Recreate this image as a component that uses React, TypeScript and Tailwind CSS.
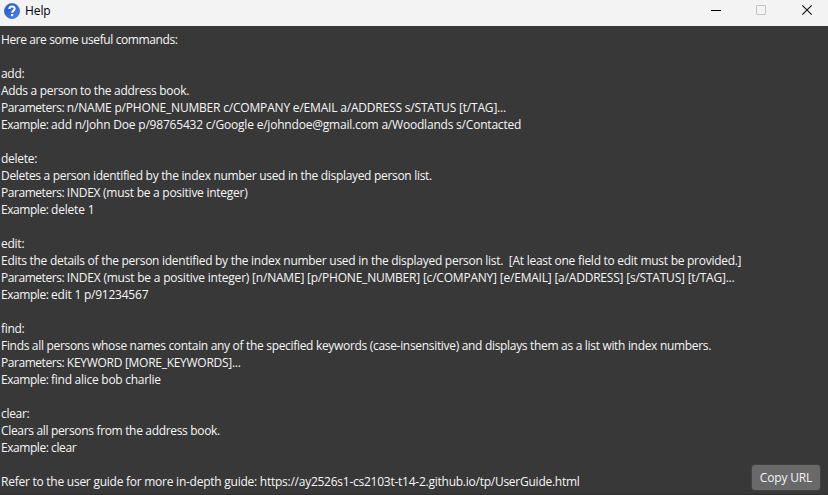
type Line = { label?: string; text: string; tracking: string };

const blank: Line = { text: "", tracking: "" };

const lines: Line[] = [
  { text: "Here are some useful commands:", tracking: "tracking-[-0.4px]" },
  blank,
  { text: "add:", tracking: "tracking-[-0.3px]" },
  { text: "Adds a person to the address book.", tracking: "tracking-[-0.3px]" },
  { label: "Parameters: ", text: "n/NAME p/PHONE_NUMBER c/COMPANY e/EMAIL a/ADDRESS s/STATUS [t/TAG]...", tracking: "tracking-[-0.19px]" },
  { label: "Example: ", text: "add n/John Doe p/98765432 c/Google e/johndoe@gmail.com a/Woodlands s/Contacted", tracking: "tracking-[-0.205px]" },
  blank,
  { text: "delete:", tracking: "tracking-[-0.28px]" },
  { text: "Deletes a person identified by the index number used in the displayed person list.", tracking: "tracking-[-0.31px]" },
  { label: "Parameters: ", text: "INDEX (must be a positive integer)", tracking: "tracking-[-0.26px]" },
  { label: "Example: ", text: "delete 1", tracking: "tracking-[-0.2px]" },
  blank,
  { text: "edit:", tracking: "tracking-[-0.25px]" },
  { text: "Edits the details of the person identified by the index number used in the displayed person list.  [At least one field to edit must be provided.]", tracking: "tracking-[-0.275px]" },
  { label: "Parameters: ", text: "INDEX (must be a positive integer) [n/NAME] [p/PHONE_NUMBER] [c/COMPANY] [e/EMAIL] [a/ADDRESS] [s/STATUS] [t/TAG]...", tracking: "tracking-[-0.21px]" },
  { label: "Example: ", text: "edit 1 p/91234567", tracking: "tracking-[-0.23px]" },
  blank,
  { text: "find:", tracking: "tracking-[-0.3px]" },
  { text: "Finds all persons whose names contain any of the specified keywords (case-insensitive) and displays them as a list with index numbers.", tracking: "tracking-[-0.315px]" },
  { label: "Parameters: ", text: "KEYWORD [MORE_KEYWORDS]...", tracking: "tracking-[-0.28px]" },
  { label: "Example: ", text: "find alice bob charlie", tracking: "tracking-[-0.27px]" },
  blank,
  { text: "clear:", tracking: "tracking-[-0.3px]" },
  { text: "Clears all persons from the address book.", tracking: "tracking-[-0.33px]" },
  { label: "Example: ", text: "clear", tracking: "tracking-[-0.4px]" },
  blank,
  { text: "Refer to the user guide for more in-depth guide: https://ay2526s1-cs2103t-t14-2.github.io/tp/UserGuide.html", tracking: "tracking-[-0.25px]" },
];

function HelpIcon() {
  return (
    <svg width="16" height="16" viewBox="0 0 16 16">
      <defs>
        <linearGradient id="ball" x1="0" y1="0" x2="1" y2="1">
          <stop offset="0" stopColor="#2a59c4" />
          <stop offset="0.5" stopColor="#316bdc" />
          <stop offset="1" stopColor="#4b8cf2" />
        </linearGradient>
      </defs>
      <circle cx="8" cy="8" r="7.6" fill="url(#ball)" stroke="#2a55b5" strokeWidth="0.6" />
      <path d="M5.4 6C5.4 4.2 6.5 3.5 8 3.5s2.6.8 2.6 2.2c0 1.9-2.5 1.9-2.5 4" fill="none" stroke="#fff" strokeWidth="2.1" />
      <rect x="7" y="11" width="2.2" height="2.2" fill="#fff" />
    </svg>
  );
}

export default function App() {
  return (
    <div className="flex h-[495px] w-[828px] flex-col overflow-hidden bg-[#383838] font-['Open_Sans','Noto_Sans',sans-serif] text-[12px]">
      <header className="flex h-[26px] shrink-0 items-start justify-between bg-[#f3f3f3] text-black">
        <div className="flex items-center gap-[5px] pt-[2px] pl-1">
          <HelpIcon />
          <span className="leading-[18px] tracking-[-0.1px]">Help</span>
        </div>
        <svg width="138" height="26" viewBox="0 0 138 26" fill="none">
          <path d="M21 10.5h10" stroke="#000" />
          <rect x="66.5" y="5.5" width="9" height="9" rx="0.5" stroke="#c3c3c3" />
          <path d="M112.3 5.3l9.4 9.4M121.7 5.3l-9.4 9.4" stroke="#111" strokeWidth="1.1" />
        </svg>
      </header>
      <main className="flex min-h-0 flex-1 items-end justify-between border-b border-[#302e2e] pb-[3px]">
        <div className="w-0 pb-px pl-px text-[#f6f6f6]">
          {lines.map(({ label, text, tracking }, i) => (
            <p key={i} className={`h-[17px] leading-[17px] whitespace-pre ${tracking}`}>
              {label && <span className="tracking-[-0.45px]">{label}</span>}
              {text}
            </p>
          ))}
        </div>
        <button className="mr-2 mb-px h-[25px] w-[68px] rounded-[3px] bg-[#696969] leading-[25px] tracking-[-0.15px] text-[#f4f4f4] ring-1 ring-[#424242]">Copy URL</button>
      </main>
    </div>
  );
}
